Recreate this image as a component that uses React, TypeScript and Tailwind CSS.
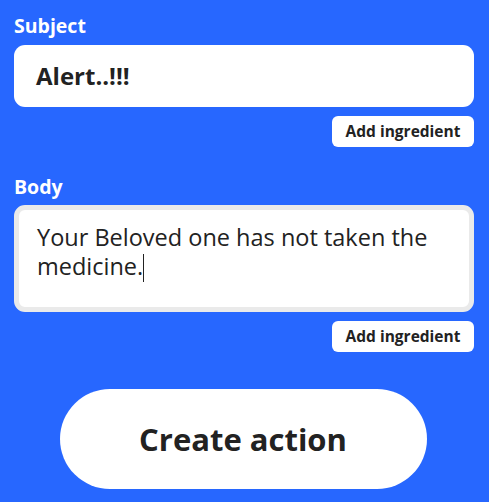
import React from "react";

function AddIngredient() {
  return (
    <div className="flex justify-end mt-[9px]">
      <button className="h-[31px] w-[142px] rounded-[6px] bg-white text-[15.5px] font-bold text-[#222]">
        Add ingredient
      </button>
    </div>
  );
}

export default function App() {
  return (
    <div
      className="w-[489px] h-[502px] bg-[#2767ff] pl-[14px] pr-[15px] pt-[14px] overflow-hidden"
      style={{ fontFamily: "'Open Sans', Lato, sans-serif" }}
    >
      <label className="block text-[19.5px] font-bold text-white leading-[24px]">Subject</label>
      <div className="mt-[7px] h-[62px] rounded-[11px] bg-white px-[22px] flex items-center">
        <span className="text-[24px] font-bold text-[#222]">Alert..!!!</span>
      </div>
      <AddIngredient />

      <label className="block mt-[28px] text-[19.5px] font-bold text-white leading-[24px]">Body</label>
      <div className="mt-[6px] h-[107px] rounded-[11px] bg-white border-[5px] border-[#eaeaea] px-[18px] pt-[13px]">
        <p className="text-[23.5px] leading-[29px] text-[#222]">
          Your Beloved one has not taken the medicine.
          <span className="inline-block w-[1px] h-[28px] bg-[#222] align-[-7px]" />
        </p>
      </div>
      <AddIngredient />

      <div className="flex justify-center mt-[37px] pr-[2px]">
        <button className="h-[100px] w-[367px] rounded-full bg-white text-[31px] font-bold text-[#222]">
          Create action
        </button>
      </div>
    </div>
  );
}
